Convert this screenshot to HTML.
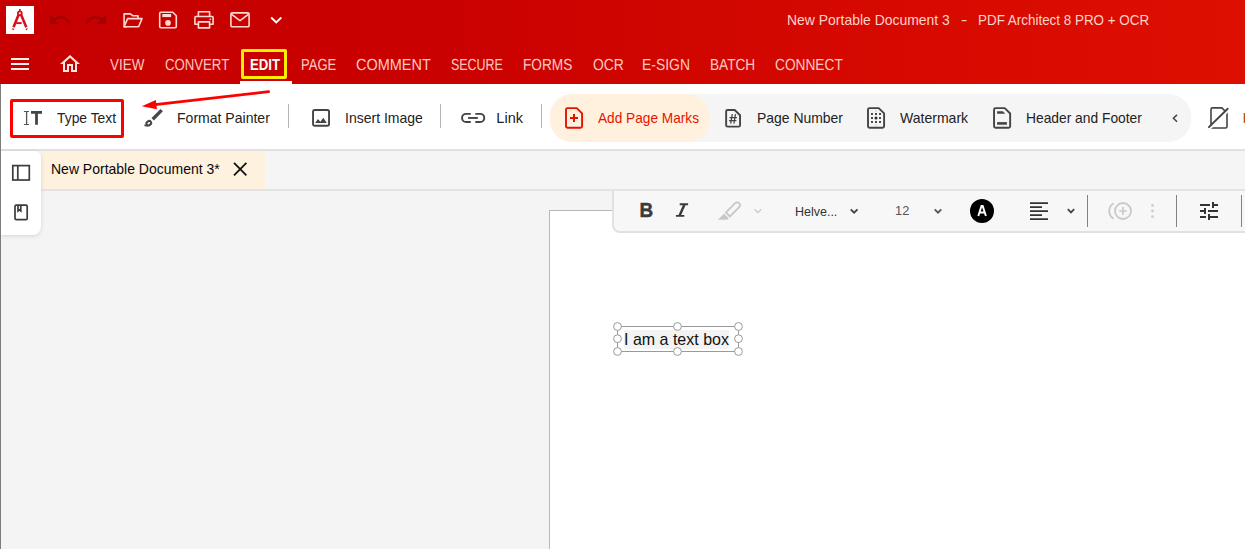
<!DOCTYPE html>
<html><head><meta charset="utf-8">
<style>
*{box-sizing:border-box;margin:0;padding:0}
html,body{width:1245px;height:549px;overflow:hidden;background:#f4f4f4;font-family:"Liberation Sans",sans-serif;}
.abs{position:absolute}
svg{position:absolute;overflow:visible}
#hdr{left:0;top:0;width:1245px;height:84px;background:linear-gradient(90deg,#c60000 0%,#c90100 35%,#d50900 70%,#dd0f00 100%);}
#logo{left:6px;top:6px;width:28px;height:28px;background:#fff}
.t{position:absolute;white-space:nowrap;line-height:20px;height:20px}
.menu{text-rendering:geometricPrecision;font-size:16px;color:#ffc9c0;}
.title{font-size:14.5px;color:#ffd2ca;}
.rl{font-size:14.5px;color:#222;}
#ribbon{left:0;top:84px;width:1245px;height:65px;background:#fff}
#rline{left:0;top:149px;width:1245px;height:2px;background:#e1e1e1}
.sep{position:absolute;top:104px;width:1px;height:24px;background:#b4b4b4}
#tabbar{left:0;top:151px;width:1245px;height:38px;background:#f5f5f5}
#tline{left:0;top:189px;width:1245px;height:2px;background:#e3e3e3}
#doctab{left:41px;top:151px;width:224px;height:38px;background:#fef1de}
#side{left:1px;top:151px;width:40px;height:84px;background:#fff;border-radius:0 6px 8px 0;box-shadow:0 1px 4px rgba(0,0,0,.13)}
#page{left:549px;top:210px;width:700px;height:345px;background:#fff;border:1px solid #b8b8b8}
#ftb{left:612px;top:191px;width:640px;height:42px;background:#f7f7f7;border:2px solid #e1e1e1;border-top:none;border-radius:0 0 0 8px}
#lborder{left:0;top:84px;width:1px;height:465px;background:#7d7d7d}
#greypill{left:550px;top:94px;width:641px;height:48px;border-radius:22px;background:#f5f5f5}
#orpill{left:550px;top:94px;width:159px;height:48px;border-radius:22px;background:#fff1dd}
#redbox{left:10px;top:99px;width:114px;height:39px;border:3px solid #ff0000;border-radius:2px}
#ybox{left:241px;top:49px;width:46px;height:30px;border:3px solid #ffee00;border-radius:2px}
#uline{left:240px;top:81px;width:52px;height:3px;background:#fff}
.fsep{position:absolute;top:195px;width:1px;height:32px;background:#828282}
</style></head><body>
<div class="abs" id="hdr"></div>
<div class="abs" id="logo"></div>

<svg style="left:6px;top:6px" width="28" height="28" viewBox="6 6 28 28">
 <g fill="none" stroke="#d5121a" stroke-width="2.6" stroke-linecap="butt">
  <path d="M18.7 14.4 L13.5 27.2"/><path d="M21.0 14.4 L26.3 27.2"/>
  <path d="M16.2 23.1 H21.7" stroke-width="1.9"/>
  <path d="M19.85 8.9 V11.4" stroke-width="1.6"/>
 </g>
 <circle cx="19.85" cy="13.3" r="1.9" fill="#fff" stroke="#d5121a" stroke-width="1.8"/>
 <path d="M12.0 27.9 l2.5 1.0 l-1.500 1.5z M27.8 27.9 l-2.5 1.0 l1.500 1.5z" fill="#d5121a"/>
</svg>
<svg style="left:47.8px;top:8px" width="24" height="24" viewBox="0 0 24 24"><path fill="#a30000" d="M12.5 8c-2.65 0-5.05.99-6.9 2.6L2 7v9h9l-3.62-3.620c1.39-1.16 3.160-1.88 5.120-1.88 3.540 0 6.550 2.310 7.600 5.500l2.370-.78C21.080 11.030 17.150 8 12.500 8z"/></svg>
<svg style="left:83.7px;top:8px" width="24" height="24" viewBox="0 0 24 24"><path fill="#a30000" d="M18.400 10.600C16.550 8.990 14.150 8 11.500 8c-4.650 0-8.580 3.030-9.960 7.220L3.900 16c1.050-3.190 4.050-5.500 7.600-5.500 1.950 0 3.730.72 5.120 1.880L13 16h9V7l-3.600 3.600z"/></svg>
<svg style="left:0;top:0" width="300" height="40" viewBox="0 0 300 40">
 <g fill="none" stroke="#ffd9d2" stroke-width="1.6" stroke-linejoin="round" stroke-linecap="round">
  <!-- folder -->
  <path d="M126.3 26.7 H124.1 V13.9 H130.3 L132.6 15.7 H138 V18.4"/>
  <path d="M124.1 26.7 L127.6 18.6 H142 L138.6 26.7 Z"/>
  <!-- save -->
  <path d="M160.9 12.2 H172.8 L176.3 15.7 V26.6 Q176.3 27.8 175.1 27.8 H160.9 Q159.7 27.8 159.7 26.6 V13.4 Q159.7 12.2 160.9 12.2 Z"/>
  <!-- print -->
  <path d="M198.4 16.3 V11.7 H209.6 V16.3"/>
  <path d="M198.4 24.2 H194.9 V17.5 Q194.9 16.5 195.9 16.5 H212.1 Q213.1 16.5 213.1 17.500 V24.2 H209.6"/>
  <path d="M198.4 21.9 H209.6 V27.9 H198.400 Z"/>
  <!-- mail -->
  <path d="M232.3 12.9 H247.7 Q249.1 12.9 249.1 14.3 V25.4 Q249.1 26.8 247.700 26.8 H232.3 Q230.9 26.8 230.9 25.4 V14.300 Q230.900 12.900 232.300 12.900 Z"/>
  <path d="M231.6 14.300 L240 20.6 L248.4 14.3"/>
 </g>
 <rect x="162.300" y="14" width="8.800" height="3.100" fill="#ffd9d2"/>
 <circle cx="168" cy="22.900" r="2.800" fill="#ffd9d2"/>
 <circle cx="210.300" cy="19.300" r="0.900" fill="#ffd9d2"/>
 <path d="M271.200 17.500 L276.200 22.400 L281.300 17.500" fill="none" stroke="#fff" stroke-width="1.900"/>
</svg>
<svg style="left:0;top:46px" width="100" height="38" viewBox="0 46 100 38">
 <path d="M11 59 H29 M11 64 H29 M11 69 H29" stroke="#ffeeea" stroke-width="2" fill="none"/>
</svg>
<svg style="left:58px;top:52px" width="24" height="24" viewBox="0 0 24 24"><path fill="#ffe6e0" d="M12 5.690l5 4.500V18h-2v-6H9v6H7v-7.810l5-4.500M12 3L2 12h3v8h6v-6h2v6h6v-8h3L12 3z"/></svg>

<div class="t title" id="t1" style="left:787.10px;top:10px;transform:scaleX(0.9624);transform-origin:0 0">New Portable Document 3</div>
<div class="t title" id="t2" style="left:960.80px;top:10px;transform:scaleX(1.3143);transform-origin:0 0">-</div>
<div class="t title" id="t3" style="left:977.86px;top:10px;transform:scaleX(0.9257);transform-origin:0 0">PDF Architect 8 PRO + OCR</div>
<div class="t menu" id="m1" style="left:110.00px;top:56px;transform:scaleX(0.8393);transform-origin:0 0">VIEW</div>
<div class="t menu" id="m2" style="left:164.59px;top:56px;transform:scaleX(0.8235);transform-origin:0 0">CONVERT</div>
<div class="t menu" id="m3" style="left:249.78px;top:56px;color:#fff;font-weight:bold;transform:scaleX(0.8255);transform-origin:0 0">EDIT</div>
<div class="t menu" id="m4" style="left:301.32px;top:56px;transform:scaleX(0.8145);transform-origin:0 0">PAGE</div>
<div class="t menu" id="m5" style="left:356.21px;top:56px;transform:scaleX(0.9043);transform-origin:0 0">COMMENT</div>
<div class="t menu" id="m6" style="left:450.81px;top:56px;transform:scaleX(0.7785);transform-origin:0 0">SECURE</div>
<div class="t menu" id="m7" style="left:522.60px;top:56px;transform:scaleX(0.8538);transform-origin:0 0">FORMS</div>
<div class="t menu" id="m8" style="left:592.82px;top:56px;transform:scaleX(0.8676);transform-origin:0 0">OCR</div>
<div class="t menu" id="m9" style="left:642.44px;top:56px;transform:scaleX(0.8705);transform-origin:0 0">E-SIGN</div>
<div class="t menu" id="m10" style="left:710.33px;top:56px;transform:scaleX(0.8515);transform-origin:0 0">BATCH</div>
<div class="t menu" id="m11" style="left:775.19px;top:56px;transform:scaleX(0.8564);transform-origin:0 0">CONNECT</div>
<div class="abs" id="ybox"></div>
<div class="abs" id="uline"></div>

<div class="abs" id="ribbon"></div>
<div class="abs" id="rline"></div>
<div class="abs" id="greypill"></div>
<div class="abs" id="orpill"></div>
<div class="t rl" id="r1" style="left:56.97px;top:108px;transform:scaleX(0.9561);transform-origin:0 0">Type Text</div>
<div class="t rl" id="r2" style="left:177.33px;top:108px;transform:scaleX(0.9683);transform-origin:0 0">Format Painter</div>
<div class="t rl" id="r3" style="left:344.53px;top:108px;transform:scaleX(0.9663);transform-origin:0 0">Insert Image</div>
<div class="t rl" id="r4" style="left:496.35px;top:108px;letter-spacing:0.050px">Link</div>
<div class="t rl" id="r5" style="left:598.20px;top:108px;color:#e51400;transform:scaleX(0.9424);transform-origin:0 0">Add Page Marks</div>
<div class="t rl" id="r6" style="left:756.91px;top:108px;transform:scaleX(0.9614);transform-origin:0 0">Page Number</div>
<div class="t rl" id="r7" style="left:900.05px;top:108px;transform:scaleX(0.9680);transform-origin:0 0">Watermark</div>
<div class="t rl" id="r8" style="left:1025.89px;top:108px;transform:scaleX(0.9522);transform-origin:0 0">Header and Footer</div>
<div class="sep" style="left:288px"></div>
<div class="sep" style="left:440px"></div>
<div class="sep" style="left:541px"></div>
<div class="abs" id="redbox"></div>

<svg style="left:0;top:84px" width="1245" height="66" viewBox="0 84 1245 66">
 <!-- I-beam + T -->
 <g stroke="#555" stroke-width="1" fill="none"><path d="M23.900 111.500 H29.000 M23.900 124.500 H29.000"/><path d="M26.600 111.500 V124.500" stroke-width="1.300"/></g>
 <path d="M31 111.000 H42 V113.800 H37.900 V124.800 H35.100 V113.800 H31 Z" fill="#444"/>
 <!-- red arrow -->
 <path d="M268.600 91.700 L155 104.700" stroke="#ff0000" stroke-width="2.800" stroke-linecap="round" fill="none"/>
 <path d="M141.800 106.300 L155.800 100.100 L156.900 109.200 Z" fill="#ff0000"/>
 <!-- brush -->
 <path d="M161.700 110.100 L152.700 119.300" stroke="#484848" stroke-width="3.400" stroke-linecap="butt" fill="none"/>
 <ellipse cx="148.800" cy="123.200" rx="2.500" ry="2.000" transform="rotate(-35 148.8 123.2)" fill="none" stroke="#484848" stroke-width="2.000"/>
 <path d="M147.600 125.500 Q146.200 126.000 145.100 125.300" stroke="#484848" stroke-width="1.700" stroke-linecap="round" fill="none"/>
 <!-- image icon -->
 <rect x="313.050" y="109.950" width="16.000" height="15.800" rx="1.800" fill="none" stroke="#444" stroke-width="1.900"/>
 <path d="M315.200 122.900 L317.900 119.000 L320.400 121.700 L323.300 117.800 L326.800 122.900 Z" fill="#444"/>
 <!-- link -->
 <g fill="none" stroke="#444" stroke-width="1.900">
  <path d="M470.800 113.850 H466.100 A4.050 4.050 0 0 0 466.100 121.950 H470.800"/>
  <path d="M475.300 113.850 H480.200 A4.050 4.050 0 0 1 480.200 121.950 H475.300"/>
  <path d="M468.100 117.950 H477.900"/>
 </g>
 <!-- add page marks -->
 <g fill="none" stroke="#e21200" stroke-width="1.900" stroke-linejoin="round">
  <path d="M567.500 108.100 H576.700 L582.100 113.400 V126.300 Q582.100 127.800 580.600 127.800 H567.500 Q566.000 127.800 566.000 126.300 V109.600 Q566.000 108.100 567.500 108.100 Z"/>
  <path d="M570.000 118.000 H578.000 M574.000 114.000 V122.000" stroke-width="2.000"/>
 </g>
 <!-- page number -->
 <g fill="none" stroke="#444" stroke-width="1.900" stroke-linejoin="round">
  <path d="M727.600 110.050 H734.700 L740.050 115.300 V125.150 Q740.050 126.650 738.550 126.650 H727.600 Q726.150 126.650 726.150 125.150 V111.550 Q726.150 110.050 727.600 110.050 Z"/>
 </g>
 <g fill="none" stroke="#444" stroke-width="1.250">
  <path d="M732.300 114.100 L730.700 123.700 M735.500 114.100 L733.900 123.700 M729.500 117.600 H736.900 M729.000 120.500 H736.400"/>
 </g>
 <!-- watermark -->
 <g fill="none" stroke="#444" stroke-width="1.700" stroke-linejoin="round">
  <path d="M869.500 108.100 H878.700 L884.100 113.400 V126.300 Q884.100 127.800 882.600 127.800 H869.500 Q868.000 127.800 868.000 126.300 V109.600 Q868.000 108.100 869.500 108.100 Z" stroke-width="1.900"/>
 </g>
 <g fill="#4a4a4a">
  <rect x="871" y="113" width="2" height="2"/>
  <rect x="871" y="117" width="2" height="2"/>
  <rect x="871" y="121" width="2" height="2"/>
  <rect x="875" y="113" width="2" height="2"/>
  <rect x="875" y="121" width="2" height="2"/>
  <rect x="879" y="113" width="2" height="2"/>
  <rect x="879" y="117" width="2" height="2"/>
  <rect x="879" y="121" width="2" height="2"/>
  <circle cx="876" cy="118" r="1.500" fill="#2c2c2c"/>
  <rect x="875.3" y="110.300" width="1.400" height="1.400" fill="#cfcfcf"/><rect x="875.3" y="124.300" width="1.400" height="1.400" fill="#cfcfcf"/>
 </g>
 <!-- header footer -->
 <g fill="none" stroke="#444" stroke-width="1.900" stroke-linejoin="round">
  <path d="M995.550 108.150 H1004.750 L1010.150 113.450 V126.250 Q1010.150 127.750 1008.650 127.750 H995.550 Q994.050 127.750 994.050 126.250 V109.650 Q994.050 108.150 995.550 108.150 Z"/>
 </g>
 <path d="M997.100 111.200 H1002.900 L1005.300 113.700 H997.100 Z" fill="#444"/>
 <rect x="997.100" y="122.100" width="9.800" height="2.600" fill="#444"/>
 <!-- chevron < -->
 <path d="M1177.000 114.900 L1173.400 118.300 L1177.000 121.800" fill="none" stroke="#444" stroke-width="1.500"/>
 <!-- page slash -->
 <g fill="none" stroke="#444" stroke-width="1.600" stroke-linejoin="round">
  <path d="M1212.500 107.900 H1221.900 L1227.000 113.000 V126.500 Q1227.000 128.000 1225.500 128.000 H1211.000 V109.400 Q1211.000 107.900 1212.500 107.900 Z"/>
  <path d="M1210.000 128.500 L1229.000 110.000" stroke="#ffffff" stroke-width="2.000"/>
  <path d="M1208.900 127.100 L1227.700 108.700" stroke-width="1.900" stroke-linecap="round"/>
 </g>
 <rect x="1243.700" y="113.000" width="1.300" height="9.900" fill="#b5501a"/>
</svg>


<div class="abs" id="tabbar"></div>
<div class="abs" id="tline"></div>
<div class="abs" id="doctab"></div>
<div class="t rl" id="d1" style="left:51.33px;top:159px;color:#08080c;transform:scaleX(0.9648);transform-origin:0 0">New Portable Document 3*</div>
<div class="abs" id="side"></div>

<svg style="left:0;top:150px" width="300" height="90" viewBox="0 150 300 90">
 <g fill="none" stroke="#3c3c3c" stroke-width="1.700">
  <rect x="12.800" y="165.600" width="16.500" height="14.400"/>
  <path d="M17.800 165.600 V180.000"/>
  <rect x="15.000" y="205.100" width="12.200" height="14.500" rx="1.200"/>
  <path d="M18.000 205.100 V210.900 L19.400 209.800 L20.800 210.900 V205.100"/>
 </g>
 <path d="M234.000 162.900 L246.400 175.300 M246.400 162.900 L234.000 175.300" stroke="#111" stroke-width="1.800" fill="none"/>
</svg>


<div class="abs" id="page"></div>
<div class="abs" id="ftb"></div>
<div class="fsep" style="left:1087px"></div>
<div class="fsep" style="left:1176px"></div>
<div class="fsep" style="left:1241px"></div>
<div class="t" id="f1" style="left:794.91px;top:202px;font-size:13px;color:#333;transform:scaleX(0.9605);transform-origin:0 0">Helve...</div>
<div class="t" id="f2" style="left:895.03px;top:201px;font-size:13px;color:#555;transform:scaleX(0.9882);transform-origin:0 0">12</div>

<svg style="left:600px;top:190px" width="645" height="50" viewBox="600 190 645 50">
 <!-- B -->
 <text x="639.600" y="216.900" font-family="Liberation Sans" font-weight="bold" font-size="19.700" fill="#3a3a3a" stroke="#3a3a3a" stroke-width="0.45" transform="translate(639.6 0) scale(0.96 1) translate(-639.6 0)">B</text>
 <!-- I -->
 <path d="M679.700 203.300 H688.100 V205.200 H685.500 L681.200 214.900 H684.300 V216.800 H675.900 V214.900 H678.500 L682.800 205.200 H679.700 Z" fill="#3a3a3a"/>
 <!-- highlighter -->
 <path d="M725.900 212.400 L735.180 203.180 A2.850 2.850 0 0 1 739.220 207.220 L729.920 216.420 Z" fill="none" stroke="#c7c7c7" stroke-width="1.800" stroke-linejoin="miter"/>
 <path d="M724.000 213.700 L728.700 218.300 L727.200 219.750 H717.800 L719.200 218.500 Z" fill="#c7c7c7"/>
 <path d="M754.500 209.300 L757.900 212.600 L761.300 209.300" fill="none" stroke="#c9c9c9" stroke-width="1.300"/>
 <!-- chevrons -->
 <path d="M850.700 209.400 L854.100 212.700 L857.500 209.400" fill="none" stroke="#444" stroke-width="1.900"/>
 <path d="M934.700 209.400 L938.000 212.700 L941.300 209.400" fill="none" stroke="#555" stroke-width="1.800"/>
 <path d="M1067.800 209.200 L1071.000 212.500 L1074.200 209.200" fill="none" stroke="#444" stroke-width="1.800"/>
 <!-- A circle -->
 <circle cx="982.000" cy="210.900" r="12.000" fill="#000"/>
 <path d="M978.300 216.000 L981.500 205.900 H982.700 L985.900 216.000 M979.700 212.500 H984.500" fill="none" stroke="#fff" stroke-width="1.900" stroke-linejoin="miter"/>
 <!-- align -->
 <path d="M1030.000 203.100 H1048.000 M1030.000 207.100 H1042.000 M1030.000 211.100 H1048.000 M1030.000 215.100 H1042.000 M1030.000 219.100 H1048.000" stroke="#333" stroke-width="1.600" fill="none"/>
 <!-- disabled plus -->
 <g fill="none" stroke="#c9c9c9" stroke-width="1.800">
  <circle cx="1123.000" cy="211.000" r="8.000"/>
  <path d="M1113.500 203.300 A9.100 9.100 0 0 0 1113.500 218.700"/>
  <path d="M1119.100 211.000 H1126.900 M1123.000 207.100 V214.900" stroke-width="1.700"/>
 </g>
 <g fill="#cdcdcd"><circle cx="1152.500" cy="205.400" r="1.400"/><circle cx="1152.500" cy="211.000" r="1.400"/><circle cx="1152.500" cy="216.600" r="1.400"/></g>
</svg>
<svg style="left:1196.800px;top:199.100px" width="24" height="24" viewBox="0 0 24 24"><path fill="#333" d="M3 17v2h6v-2H3zM3 5v2h10V5H3zm10 16v-2h8v-2h-8v-2h-2v6h2zM7 9v2H3v2h4v2h2V9H7zm14 4v-2H11v2h10zm-6-4h2V7h4V5h-4V3h-2v6z"/></svg>



<div class="abs" style="left:624px;top:330px;width:105px;height:19px;background:#f3f3f3"></div>
<svg style="left:605px;top:315px" width="150" height="50" viewBox="605 315 150 50">
 <rect x="617.500" y="326.500" width="121" height="25" fill="none" stroke="#9a9a9a" stroke-width="1"/>
 <g fill="#fff" stroke="#9a9a9a" stroke-width="1">
  <circle cx="617.500" cy="326.500" r="3.900"/><circle cx="677.500" cy="326.500" r="3.900"/><circle cx="738.500" cy="326.500" r="3.900"/>
  <circle cx="617.500" cy="338.700" r="3.900"/><circle cx="738.500" cy="338.700" r="3.900"/>
  <circle cx="617.500" cy="351.500" r="3.900"/><circle cx="677.500" cy="351.500" r="3.900"/><circle cx="738.500" cy="351.500" r="3.900"/>
 </g>
</svg>
<div class="t" id="x1" style="left:623.52px;top:330px;font-size:16.6px;color:#111;transform:scaleX(0.9641);transform-origin:0 0">I am a text box</div>

<div class="abs" id="lborder"></div>
</body></html>
